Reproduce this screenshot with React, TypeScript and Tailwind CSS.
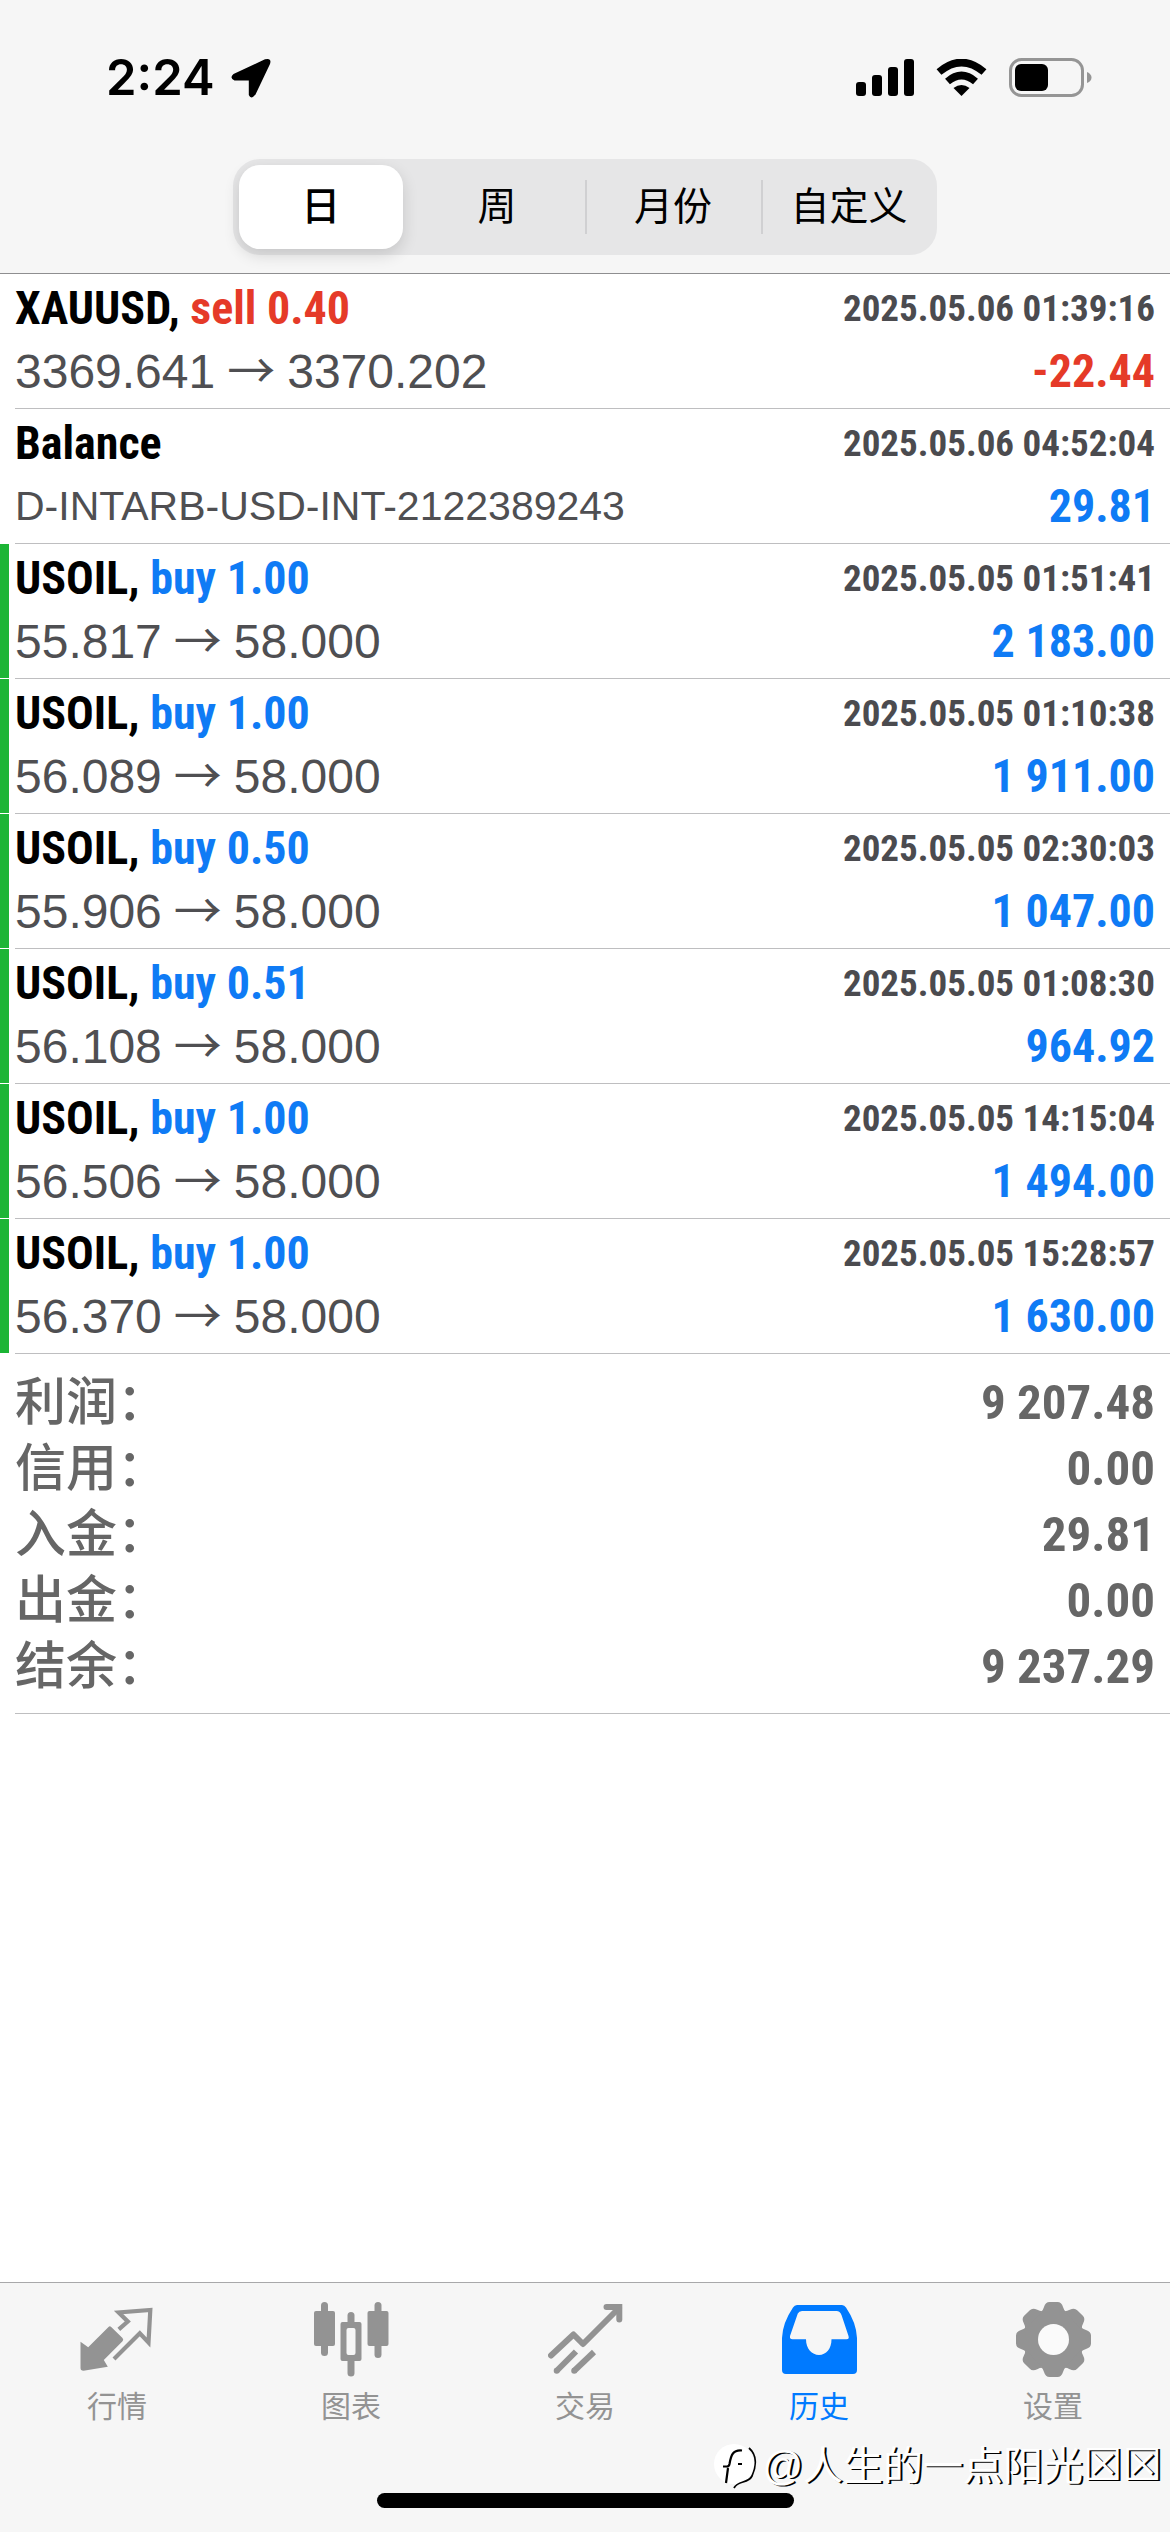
import { useState } from "react";

type DealType = {
  symbol: string;
  side?: "buy" | "sell";
  volume?: string;
  from?: string;
  to?: string;
  comment?: string;
  time: string;
  profit: string;
  marked?: boolean;
};

const periods = ["日", "周", "月份", "自定义"];

const deals: DealType[] = [
  { symbol: "XAUUSD", side: "sell", volume: "0.40", from: "3369.641", to: "3370.202", time: "2025.05.06 01:39:16", profit: "-22.44" },
  { symbol: "Balance", comment: "D-INTARB-USD-INT-2122389243", time: "2025.05.06 04:52:04", profit: "29.81" },
  { symbol: "USOIL", side: "buy", volume: "1.00", from: "55.817", to: "58.000", time: "2025.05.05 01:51:41", profit: "2 183.00", marked: true },
  { symbol: "USOIL", side: "buy", volume: "1.00", from: "56.089", to: "58.000", time: "2025.05.05 01:10:38", profit: "1 911.00", marked: true },
  { symbol: "USOIL", side: "buy", volume: "0.50", from: "55.906", to: "58.000", time: "2025.05.05 02:30:03", profit: "1 047.00", marked: true },
  { symbol: "USOIL", side: "buy", volume: "0.51", from: "56.108", to: "58.000", time: "2025.05.05 01:08:30", profit: "964.92", marked: true },
  { symbol: "USOIL", side: "buy", volume: "1.00", from: "56.506", to: "58.000", time: "2025.05.05 14:15:04", profit: "1 494.00", marked: true },
  { symbol: "USOIL", side: "buy", volume: "1.00", from: "56.370", to: "58.000", time: "2025.05.05 15:28:57", profit: "1 630.00", marked: true },
];

const totals = [
  { label: "利润", val: "9 207.48" },
  { label: "信用", val: "0.00" },
  { label: "入金", val: "29.81" },
  { label: "出金", val: "0.00" },
  { label: "结余", val: "9 237.29" },
];

const narrow = "font-['Roboto_Condensed','Liberation_Sans',sans-serif] font-bold";
const cjk = "font-['Liberation_Sans','Noto_Sans_CJK_SC',sans-serif]";

const QuotesIcon = () => (
  <svg width="75" height="75" viewBox="0 0 75 75">
    <path d="M0.5 39.7 L8.2 45.3 L28.5 25 Q29.8 23.7 31.2 25 L42.5 36 Q44 37.8 42.5 39.3 L23.8 58 L27.8 64.7 L3.5 68.7 Q0.5 68.7 0.5 66 Z" fill="currentColor" />
    <path d="M38.8 27.3 L47.8 19.5 L38.6 10.4 L70.3 8 L68.5 40.5 L59.8 31.3 L34 57" fill="none" stroke="currentColor" strokeWidth="4.2" />
  </svg>
);

const ChartIcon = () => (
  <svg width="75" height="75" viewBox="0 0 75 75" fill="currentColor">
    <rect x="0" y="9" width="21" height="35" rx="2" />
    <rect x="7" y="0" width="7" height="54" rx="3.5" />
    <rect x="33.5" y="10" width="7" height="16" rx="3.5" />
    <rect x="33.5" y="54" width="7" height="20.5" rx="3.5" />
    <path fillRule="evenodd" d="M28.5 20 H45.5 Q47.5 20 47.5 22 V57 Q47.5 59 45.5 59 H28.5 Q26.5 59 26.5 57 V22 Q26.5 20 28.5 20 Z M34.5 26 Q32.5 26 32.5 28 V51 Q32.5 53 34.5 53 H39.5 Q41.5 53 41.5 51 V28 Q41.5 26 39.5 26 Z" />
    <rect x="53.5" y="9" width="21" height="35" rx="2" />
    <rect x="60.5" y="0" width="7" height="56" rx="3.5" />
  </svg>
);

const TradeIcon = () => (
  <svg width="75" height="75" viewBox="0 0 75 75" fill="none" stroke="currentColor" strokeWidth="6">
    <path d="M3 53.5 L25.5 32.5 L35 42 L71 6" strokeLinecap="round" strokeLinejoin="round" />
    <path d="M58.5 5 H71.3 V17.5" strokeLinecap="round" />
    <path d="M8.5 69 L28 49.5" />
    <path d="M26 69 L46 50" />
    <circle cx="8.7" cy="68.8" r="3" fill="currentColor" stroke="none" />
    <circle cx="26.2" cy="68.8" r="3" fill="currentColor" stroke="none" />
  </svg>
);

const HistoryIcon = () => (
  <svg width="75" height="75" viewBox="0 0 75 75" fill="currentColor">
    <path
      fillRule="evenodd"
      d="M15 3 H60 Q62.5 3 64 5.5 Q74.5 21 75 36 V68 Q75 72 71 72 H4 Q0 72 0 68 V36 Q0.5 21 11 5.5 Q12.5 3 15 3 Z M20 9 Q17 9 15.8 11.5 L8 34 Q7.5 37.3 10.5 37.3 H24 C24 47 30 53 37 53 C44 53 49.5 47 49.5 37.3 H64.5 Q67.5 37.3 66.5 34 L59.5 13 Q58 9 54.5 9 Z"
    />
  </svg>
);

const SettingsIcon = () => (
  <svg width="75" height="75" viewBox="0 0 75 75" fill="currentColor">
    <circle cx="37.5" cy="37.5" r="30" />
    {[0, 45, 90, 135, 180, 225, 270, 315].map((deg) => (
      <path
        key={deg}
        transform={`rotate(${deg} 37.5 37.5)`}
        d="M25 10 Q27 8.5 28 5 Q29.5 0 33.5 0 H41.5 Q45.5 0 47 5 Q48 8.5 50 10 Z"
      />
    ))}
    <circle cx="37.5" cy="37.5" r="15.5" fill="#fafafa" />
  </svg>
);

const tabs = [
  { label: "行情", icon: QuotesIcon },
  { label: "图表", icon: ChartIcon },
  { label: "交易", icon: TradeIcon },
  { label: "历史", icon: HistoryIcon },
  { label: "设置", icon: SettingsIcon },
];

const StatusBar = () => (
  <div className="flex items-center justify-between pt-[42px] pl-[106px] pr-[78px]">
    <div className="flex items-center gap-4">
      <span className="font-['Inter',sans-serif] font-semibold text-[49px] leading-[72px]">2:24</span>
      <svg width="40" height="40" viewBox="0 0 40 40">
        <path d="M2.5 16 L34 1.3 Q41 -0.5 39 6 L24.5 36.5 Q20 42 17.8 37 V22.5 H3.5 Q-2 20 2.5 16 Z" />
      </svg>
    </div>
    <div className="flex items-center gap-[22px]">
      <svg width="58" height="38" viewBox="0 0 58 38">
        <rect x="0" y="23" width="10" height="14" rx="3" />
        <rect x="16" y="16" width="10" height="21" rx="3" />
        <rect x="32" y="8" width="10" height="29" rx="3" />
        <rect x="48" y="0" width="10" height="37" rx="3" />
      </svg>
      <svg width="51" height="38" viewBox="0 0 51 38" fill="none" stroke="#000" strokeWidth="7.5">
        <path d="M3 13 Q25.5 -6 48 13" />
        <path d="M11.5 22.5 Q25.5 10.5 39.5 22.5" />
        <path d="M17.5 29 Q25.5 23 33.5 29 L25.5 37 Z" fill="#000" stroke="none" />
      </svg>
      <svg width="83" height="40" viewBox="0 0 83 40">
        <rect x="1.5" y="1.5" width="72" height="36" rx="11" fill="none" stroke="#959595" strokeWidth="3" />
        <rect x="6" y="6" width="33" height="27" rx="6" />
        <path d="M78 14 Q82.5 16 82.5 19.5 Q82.5 23 78 25 Z" fill="#959595" />
      </svg>
    </div>
  </div>
);

const PeriodSwitch = () => {
  const [active, setActive] = useState(0);

  return (
    <div className="mx-auto mt-[45px] grid h-24 w-[60.2%] grid-cols-4 rounded-[27px] bg-[#e6e6e7]">
      {periods.map((p, i) => (
        <div key={p} className="relative flex p-1.5">
          {i > 0 && i !== active && i - 1 !== active && (
            <span className="absolute left-0 top-[21px] bottom-[21px] w-0.5 bg-[#d0d0d2]" />
          )}
          <button
            type="button"
            onClick={() => setActive(i)}
            className={`flex-1 rounded-[21px] text-[39px] leading-[54px] text-black whitespace-nowrap ${cjk} ${
              i === active ? "bg-white font-medium shadow-[0_6px_16px_rgba(0,0,0,0.14)]" : ""
            }`}
          >
            {p}
          </button>
        </div>
      ))}
    </div>
  );
};

const DealRow = ({ deal }: { deal: DealType }) => (
  <li className="flex">
    <span className={`mr-1.5 mb-px w-[9px] ${deal.marked ? "bg-[#1cb535]" : ""}`}></span>
    <div className="flex-1 border-b border-[#bebec0] pt-[3px] pb-[5px] pr-[15px]">
      <div className="flex items-center justify-between leading-[63px]">
        <span className={`text-[46px] text-black ${narrow}`}>
          {deal.symbol}
          {deal.side && (
            <>
              ,{" "}
              <span className={deal.side === "sell" ? "text-[#e53a28]" : "text-[#0f7bf5]"}>
                {deal.side} {deal.volume}
              </span>
            </>
          )}
        </span>
        <span className={`text-[37px] text-[#4b4b4f] ${narrow}`}>{deal.time}</span>
      </div>
      <div className="flex items-center justify-between leading-[63px]">
        {deal.comment ? (
          <span className="font-['Liberation_Sans',sans-serif] text-[41px] text-[#4f4f52]">{deal.comment}</span>
        ) : (
          <span className="flex items-center gap-3 font-['Liberation_Sans',sans-serif] text-[48px] text-[#4f4f52]">
            <span>{deal.from}</span>
            <span className="font-['Roboto','Noto_Sans_CJK_SC',sans-serif] leading-none">→</span>
            <span>{deal.to}</span>
          </span>
        )}
        <span className={`text-[46px] ${narrow} ${deal.profit.startsWith("-") ? "text-[#e53a28]" : "text-[#0f7bf5]"}`}>
          {deal.profit}
        </span>
      </div>
    </div>
  </li>
);

const Totals = () => (
  <dl className="ml-[15px] border-b border-[#bebec0] pt-4 pb-[13px] pr-[15px] text-[#666]">
    {totals.map((t) => (
      <div key={t.label} className="flex items-center justify-between leading-[66px]">
        <dt className={`text-[51px] font-medium ${cjk}`}>{t.label}：</dt>
        <dd className={`text-[49px] ${narrow}`}>{t.val}</dd>
      </div>
    ))}
  </dl>
);

const TabBar = () => (
  <footer className="mt-auto border-t border-[#a8a8aa] bg-[#f6f6f6] pt-[19px] pb-6">
    <nav className="grid grid-cols-5">
      {tabs.map(({ label, icon: Icon }) => (
        <button
          type="button"
          key={label}
          className={`flex flex-col items-center gap-3 ${label === "历史" ? "text-[#007aff]" : "text-[#939393]"}`}
        >
          <Icon />
          <span className={`text-[30px] leading-9 ${cjk}`}>{label}</span>
        </button>
      ))}
    </nav>
    <div className="mx-auto mt-[68px] h-[15px] w-[417px] rounded-full bg-black"></div>
  </footer>
);

const Watermark = () => (
  <div className="absolute right-2 bottom-9 flex items-center gap-1">
    <svg width="46" height="48" viewBox="0 0 46 48" fill="none" stroke="#000">
      <circle cx="21" cy="22" r="20" fill="#fff" stroke="none" />
      <path d="M36 6 C44 13 43.5 24 39 34 C35 42 25 38 21 46" strokeWidth="1.8" />
      <path d="M29 8.5 C20 7.5 18 13 16.5 22 Q16 24.5 14 24.5 H10 M25 22 H29 M15 26 L13 41" strokeWidth="2.2" />
    </svg>
    <span className="font-['Liberation_Sans','Noto_Sans_CJK_SC','DejaVu_Sans',sans-serif] text-[40px] leading-[60px] text-white [text-shadow:2px_1px_0_#000]">
      @人生的一点阳光<span className="text-[44px] leading-none">☒☒</span>
    </span>
  </div>
);

const App = () => {
  return (
    <div className="relative flex min-h-screen flex-col bg-white text-black">
      <header className="border-b border-[#8e8e90] bg-[#f6f6f6] pb-[18px]">
        <StatusBar />
        <PeriodSwitch />
      </header>
      <main>
        <ul>
          {deals.map((deal) => (
            <DealRow key={deal.time} deal={deal} />
          ))}
        </ul>
        <Totals />
      </main>
      <TabBar />
      <Watermark />
    </div>
  );
};

export default App;
